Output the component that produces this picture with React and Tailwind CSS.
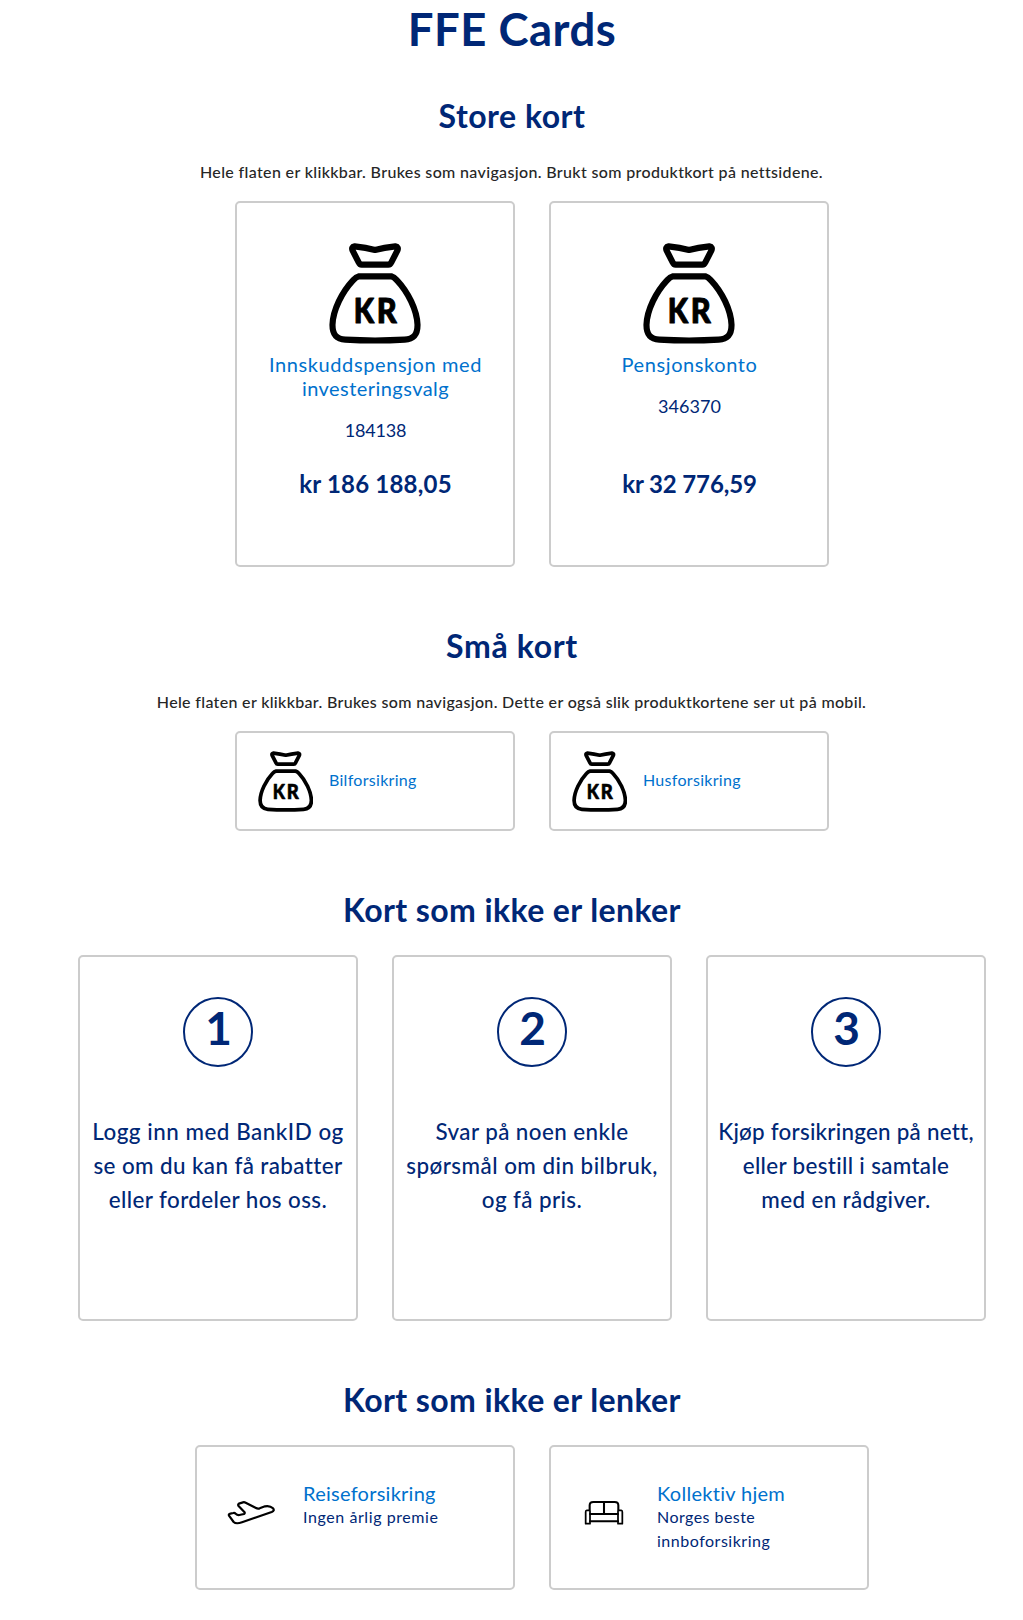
import React from "react";

function MoneyBag({ className }) {
  return (
    <svg viewBox="27 21 276 303" className={className} fill="none" stroke="#000" strokeWidth="18.5" strokeLinejoin="round">
      <path d="M104 31 Q138 35 165 42 Q192 35 226 31 Q237 33 232 44 L214 79 Q211 86 205 86 H125 Q119 86 116 79 L98 44 Q93 33 104 31 Z" />
      <path d="M117 121 H214 Q222 123 231 133 C264 168 291 222 292.5 266 C293 297 280 309 254 311 Q165 316 76 311 C50 309 37 297 37.5 266 C39 222 66 168 99 133 Q108 123 117 121 Z" />
      <g fontSize="101" fontWeight="900" fontFamily="Lato, sans-serif" fill="#000" stroke="#000" strokeWidth="3">
        <text x="101" y="260" textLength="61" lengthAdjust="spacingAndGlyphs">K</text>
        <text x="170" y="260" textLength="60" lengthAdjust="spacingAndGlyphs">R</text>
      </g>
    </svg>
  );
}

function PlaneIcon() {
  return (
    <svg viewBox="0 0 150 90" className="h-[30px] w-[50px]" fill="none" stroke="#000" strokeWidth="6.6" strokeLinejoin="round" strokeLinecap="round">
      <path d="M9 53 Q7 48 13 47 L22 45 Q26 44 29 47 Q34 52 40 51 L54 48 Q58 46 55 42 L37 23 Q35 18 41 16 L51 13 Q55 12 59 14 L90 30 Q95 33 101 31 L117 25 Q132 22 141 31 Q147 38 137 42 L48 73 Q30 79 23 72 Z" />
    </svg>
  );
}

function SofaIcon() {
  return (
    <svg viewBox="0 0 150 90" className="h-[30px] w-[50px]" fill="none" stroke="#000" strokeWidth="6.2" strokeLinejoin="round" strokeLinecap="round">
      <path d="M29 36 V22 Q29 12 40 12 H104 Q115 12 115 22 V36 M72 13 V47" />
      <path d="M30 48 H114 M30 70 H114" />
      <path d="M20 37 H27 Q30 37 30 40 V77 H17 V42 Q17 37 20 37 Z" strokeWidth="5.2" />
      <path d="M117 37 H124 Q127 37 127 42 V77 H114 V40 Q114 37 117 37 Z" strokeWidth="5.2" />
    </svg>
  );
}

const card = "box-border rounded-[5px] border-2 border-[#ccc] bg-white";
const row = "flex justify-center gap-[34px] pl-[41px]";

function Heading({ children, className = "" }) {
  return <h2 className={"pl-px text-center text-[32px] leading-[40px] font-bold " + className}>{children}</h2>;
}

function AccountCard({ title, number, amount, numberClass = "", amountClass = "" }) {
  return (
    <a className={card + " flex h-[366px] w-[280px] flex-col items-center px-6 pt-10 text-center"}>
      <MoneyBag className="h-[101px] w-[92px]" />
      <div className="mt-[8px] min-h-[116px] pl-px">
        <div className="text-[20px] leading-[24px] text-[#0071cd]">{title}</div>
        <div className={"mt-[18px] text-[18px] leading-[24px] " + numberClass}>{number}</div>
      </div>
      <div className={"pl-px text-[24px] leading-[32px] font-bold whitespace-nowrap " + amountClass}>{amount}</div>
    </a>
  );
}

function SmallCard({ children }) {
  return (
    <a className={card + " flex h-[100px] w-[280px] items-center gap-[16px] pl-[20.5px] text-[16px] text-[#0071cd]"}>
      <MoneyBag className="h-[61px] w-[55.5px]" />
      <span className="-mt-[2px] leading-[24px] tracking-[0.3px]">{children}</span>
    </a>
  );
}

function StepCard({ number, lines }) {
  return (
    <div className={card + " flex h-[366px] w-[280px] flex-col items-center pt-10"}>
      <div className="box-border h-[70px] w-[70px] rounded-full border-2 border-[#002776] pl-px text-center text-[46px] leading-[57px] font-bold">
        {number}
      </div>
      <div className="mt-[48px] text-center text-[22.4px] leading-[34px] font-medium whitespace-nowrap">
        {lines.map(([text, tracking]) => (
          <div key={text} className={tracking}>{text}</div>
        ))}
      </div>
    </div>
  );
}

function ProductCard({ icon, title, titleClass, children }) {
  return (
    <div className={card + " flex h-[145px] w-[320px] pt-[34px] pl-[29px]"}>
      <div className="mt-[17px] w-[77px] shrink-0">{icon}</div>
      <div>
        <div className={"text-[20px] leading-[24px] text-[#0071cd] " + titleClass}>{title}</div>
        <div className="text-[16px] leading-[24px]">{children}</div>
      </div>
    </div>
  );
}

export default function App() {
  return (
    <main className="min-h-[1620px] w-full bg-white font-['Lato',sans-serif] text-[#002776]">
      <h1 className="pt-px pl-px text-center text-[45.5px] leading-[56px] font-bold tracking-[0.5px]">FFE Cards</h1>

      <section className="mt-[39px]">
        <Heading className="tracking-[0.5px]">Store kort</Heading>
        <p className="mt-[24px] text-center text-[16px] leading-[24px] font-medium tracking-[0.35px] text-[#262626]">
          Hele flaten er klikkbar. Brukes som navigasjon. Brukt som produktkort på nettsidene.
        </p>
        <div className={row + " mt-[17px]"}>
          <AccountCard
            title={
              <>
                <div className="tracking-[0.6px]">Innskuddspensjon med</div>
                <div className="tracking-[0.45px]">investeringsvalg</div>
              </>
            }
            number="184138"
            numberClass="tracking-[-0.15px]"
            amount="kr 186 188,05"
            amountClass="tracking-[0.2px]"
          />
          <AccountCard
            title={<div className="tracking-[0.6px]">Pensjonskonto</div>}
            number="346370"
            numberClass="tracking-[0.1px]"
            amount="kr 32 776,59"
            amountClass="tracking-[-0.12px]"
          />
        </div>
      </section>

      <section className="mt-[59px]">
        <Heading className="tracking-[0.65px]">Små kort</Heading>
        <p className="mt-[24px] text-center text-[16px] leading-[24px] font-medium tracking-[0.33px] text-[#262626]">
          Hele flaten er klikkbar. Brukes som navigasjon. Dette er også slik produktkortene ser ut på mobil.
        </p>
        <div className={row + " mt-[17px]"}>
          <SmallCard>Bilforsikring</SmallCard>
          <SmallCard>Husforsikring</SmallCard>
        </div>
      </section>

      <section className="mt-[59px]">
        <Heading className="tracking-[0.4px]">Kort som ikke er lenker</Heading>
        <div className={row + " mt-[25px]"}>
          <StepCard
            number="1"
            lines={[
              ["Logg inn med BankID og", "tracking-[0.52px]"],
              ["se om du kan få rabatter", "tracking-[0.4px]"],
              ["eller fordeler hos oss.", "tracking-[0.4px]"],
            ]}
          />
          <StepCard
            number="2"
            lines={[
              ["Svar på noen enkle", "tracking-[0.42px]"],
              ["spørsmål om din bilbruk,", "tracking-[0.48px]"],
              ["og få pris.", "tracking-[0.4px]"],
            ]}
          />
          <StepCard
            number="3"
            lines={[
              ["Kjøp forsikringen på nett,", "tracking-[0.24px]"],
              ["eller bestill i samtale", "tracking-[0.34px]"],
              ["med en rådgiver.", "tracking-[0.38px]"],
            ]}
          />
        </div>
      </section>

      <section className="mt-[59px]">
        <Heading className="tracking-[0.4px]">Kort som ikke er lenker</Heading>
        <div className={row + " mt-[25px]"}>
          <ProductCard icon={<PlaneIcon />} title="Reiseforsikring" titleClass="tracking-[0.26px]">
            <div className="tracking-[0.58px]">Ingen årlig premie</div>
          </ProductCard>
          <ProductCard icon={<SofaIcon />} title="Kollektiv hjem" titleClass="tracking-[0.3px]">
            <div className="tracking-[0.45px]">Norges beste</div>
            <div className="tracking-[0.52px]">innboforsikring</div>
          </ProductCard>
        </div>
      </section>
    </main>
  );
}
